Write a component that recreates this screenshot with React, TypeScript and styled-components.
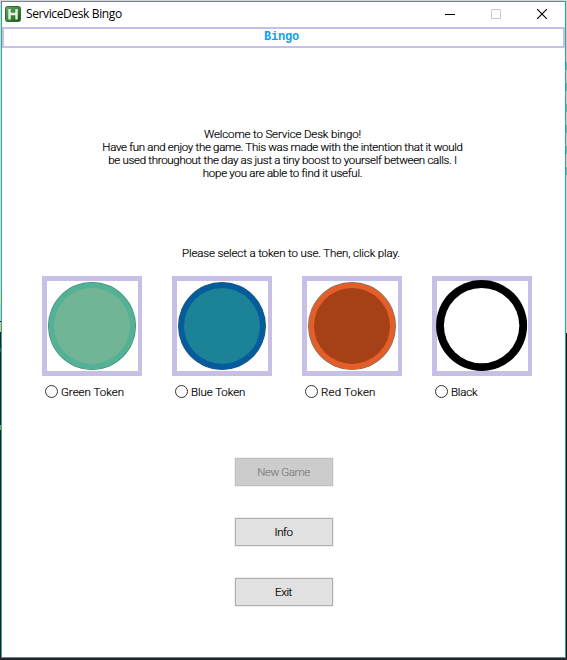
import React, { useState } from "react";
import styled, { createGlobalStyle } from "styled-components";

const GlobalStyle = createGlobalStyle`
  body { margin: 0; overflow: hidden; }
  *, *::before, *::after { box-sizing: border-box; }
`;

const lilac = "#c7bfe6";

const Desktop = styled.div`
  width: 567px;
  height: 660px;
  padding: 1px 1px 2px;
  font-family: Roboto, "Liberation Sans", sans-serif;
  font-size: 11.5px;
  font-weight: 300;
  -webkit-text-stroke: 0.2px currentColor;
  color: #000;
  background:
    linear-gradient(#d6d6d6, #d6d6d6) 0 0 / 567px 1px no-repeat,
    linear-gradient(#24242b, #20272b) 0 658px / 567px 2px no-repeat,
    linear-gradient(
        #d6d6d6 0 294px, #e3dfa0 294px 303px, #cfcfcf 303px 321px, #111 321px 322px,
        #e3c07a 322px 332px, #1b1d24 332px 348px, #4a4a50 348px 352px, #1b1d24 352px 425px,
        #5aa6cf 425px 427px, #b98b3a 427px 430px, #1b1d24 430px
      ) 0 0 / 1px 658px no-repeat,
    linear-gradient(
        #cfcfcf 0 62px, #5cb0ad 62px 70px, #cfcfcf 70px 83px, #5cb0ad 83px 91px,
        #cfcfcf 91px 104px, #5cb0ad 104px 112px, #cfcfcf 112px 125px, #5cb0ad 125px 133px,
        #cfcfcf 133px 146px, #5cb0ad 146px 154px, #cfcfcf 154px 167px, #5cb0ad 167px 175px,
        #d6d6d6 175px 333px, #12161a 333px
      ) 566px 0 / 1px 658px no-repeat;
`;

const Window = styled.main`
  display: flex;
  flex-direction: column;
  height: 657px;
  border: 1px solid #25ab96;
  background: #fff;
`;

const TitleBar = styled.header`
  display: flex;
  align-items: flex-start;
  flex: 0 0 25px;
  padding-left: 3px;

  > svg { margin-top: 4px; }
`;

const Title = styled.h1`
  flex: 1;
  margin: 0 0 0 5px;
  font: 400 12px/23px "Open Sans", "Noto Sans", sans-serif;
  letter-spacing: -0.38px;
  -webkit-text-stroke: 0;
`;

const WindowButton = styled.button`
  display: grid;
  place-items: center;
  width: 46px;
  height: 24px;
  padding: 0;
  border: 0;
  background: none;
  color: ${({ disabled }) => (disabled ? "#ccc" : "#000")};
`;

const Banner = styled.div`
  flex: 0 0 20px;
  border: 2px solid ${lilac};
  padding-right: 4px;
  text-align: center;
  font: 700 12px/17px "Liberation Mono", monospace;
  letter-spacing: -0.2px;
  -webkit-text-stroke: 0;
  color: #119fe8;
`;

const Welcome = styled.p`
  display: flex;
  flex-direction: column;
  align-items: center;
  margin: 80px 2px 0 0;
  line-height: 13px;
`;

const Line = styled.span<{ $spacing: number }>`
  white-space: nowrap;
  letter-spacing: ${({ $spacing }) => $spacing}px;
`;

const Prompt = styled.p`
  margin: 67px 0 0 180px;
  line-height: 13px;
`;

const Tokens = styled.div`
  display: grid;
  grid-template-columns: repeat(4, 100px);
  column-gap: 30px;
  margin: 16px 0 0 40px;
`;

const TokenOption = styled.label`
  display: flex;
  flex-direction: column;
  gap: 8px;
`;

const TokenFrame = styled.span`
  display: block;
  height: 100px;
  border: 5px solid ${lilac};
  border-right-width: 4px;

  svg { display: block; overflow: visible; }
`;

const Choice = styled.span`
  display: flex;
  align-items: center;
  gap: 3px;
  height: 15px;
  padding-left: 3px;
  white-space: nowrap;
`;

const Radio = styled.input`
  appearance: none;
  width: 13px;
  height: 13px;
  margin: 0;
  border: 1px solid #333;
  border-radius: 50%;
  background: #fff;

  &:checked { box-shadow: inset 0 0 0 3px #fff; background: #222; }
`;

const Actions = styled.div`
  display: flex;
  flex-direction: column;
  gap: 32px;
  width: 98px;
  margin: 59px 0 0 233px;
`;

const ActionButton = styled.button`
  height: 28px;
  padding: 0 1px 0 0;
  border: 1px solid #adadad;
  box-shadow: 0 0 0 1px #f0f0f0;
  background: #e1e1e1;
  color: #000;
  font: inherit;
  letter-spacing: -0.4px;

  &:disabled { border-color: #bfbfbf; background: #ccc; color: #838383; }
`;

function AppIcon() {
  return (
    <svg width="16" height="16" viewBox="0 0 16 16">
      <defs>
        <linearGradient id="leaf" x1="0" y1="0" x2="1" y2="1">
          <stop offset="0" stopColor="#69a967" />
          <stop offset="0.5" stopColor="#3c873b" />
          <stop offset="1" stopColor="#14570f" />
        </linearGradient>
      </defs>
      <rect x="0.5" y="0.5" width="15" height="15" rx="2" fill="url(#leaf)" stroke="#2d6e2c" />
      <path d="M4.5 3v10.5M11.5 3v10.5M4.5 8h7" fill="none" stroke="#e4f2e2" strokeWidth="2.4" />
    </svg>
  );
}

interface Token {
  label: string;
  rim: string;
  fill: string;
  edge?: string;
  spacing: number;
}

const tokens: Token[] = [
  { label: "Green Token", rim: "#55b195", fill: "#72b596", edge: "#34806a", spacing: 0 },
  { label: "Blue Token", rim: "#045b9d", fill: "#1c8295", edge: "#376457", spacing: -0.07 },
  { label: "Red Token", rim: "#e45e2a", fill: "#a54017", edge: "#53816a", spacing: 0.2 },
  { label: "Black", rim: "#000", fill: "#fff", spacing: -0.2 },
];

function TokenDisc({ rim, fill, edge }: Token) {
  return (
    <svg width="91" height="90" viewBox="0 0 91 90">
      {edge ? (
        <>
          <circle cx="45" cy="45" r="44" fill={edge} />
          <circle cx="45" cy="45" r="43.5" fill={rim} />
          <circle cx="45" cy="45" r="38" fill={fill} />
        </>
      ) : (
        <>
          <circle cx="44.6" cy="44.5" r="45.5" fill={rim} />
          <circle cx="44.6" cy="44.6" r="37.7" fill={fill} />
        </>
      )}
    </svg>
  );
}

const welcomeLines = [
  { text: "Welcome to Service Desk bingo!", spacing: -0.13 },
  { text: "Have fun and enjoy the game. This was made with the intention that it would", spacing: -0.3 },
  { text: "be used throughout the day as just a tiny boost to yourself between calls. I", spacing: -0.3 },
  { text: "hope you are able to find it useful.", spacing: -0.26 },
];

export default function App() {
  const [selected, setSelected] = useState<string | null>(null);

  return (
    <>
      <GlobalStyle />
      <Desktop>
        <Window>
          <TitleBar>
            <AppIcon />
            <Title>ServiceDesk Bingo</Title>
            <WindowButton aria-label="Minimize">
              <svg width="10" height="10"><path d="M0 5.5h10" stroke="currentColor" /></svg>
            </WindowButton>
            <WindowButton aria-label="Maximize" disabled>
              <svg width="10" height="10"><path d="M.5.5h9v9h-9z" fill="none" stroke="currentColor" /></svg>
            </WindowButton>
            <WindowButton aria-label="Close">
              <svg width="10" height="10"><path d="M0 0l10 10M10 0L0 10" stroke="currentColor" strokeWidth="1.2" /></svg>
            </WindowButton>
          </TitleBar>
          <Banner>Bingo</Banner>
          <Welcome>
            {welcomeLines.map(({ text, spacing }) => (
              <Line key={text} $spacing={spacing}>{text}</Line>
            ))}
          </Welcome>
          <Prompt>
            <Line $spacing={-0.12}>Please select a token to use. Then, click play.</Line>
          </Prompt>
          <Tokens>
            {tokens.map((token) => (
              <TokenOption key={token.label}>
                <TokenFrame><TokenDisc {...token} /></TokenFrame>
                <Choice>
                  <Radio
                    type="radio"
                    name="token"
                    checked={selected === token.label}
                    onChange={() => setSelected(token.label)}
                  />
                  <Line $spacing={token.spacing}>{token.label}</Line>
                </Choice>
              </TokenOption>
            ))}
          </Tokens>
          <Actions>
            <ActionButton disabled={!selected}>New Game</ActionButton>
            <ActionButton>Info</ActionButton>
            <ActionButton>Exit</ActionButton>
          </Actions>
        </Window>
      </Desktop>
    </>
  );
}
